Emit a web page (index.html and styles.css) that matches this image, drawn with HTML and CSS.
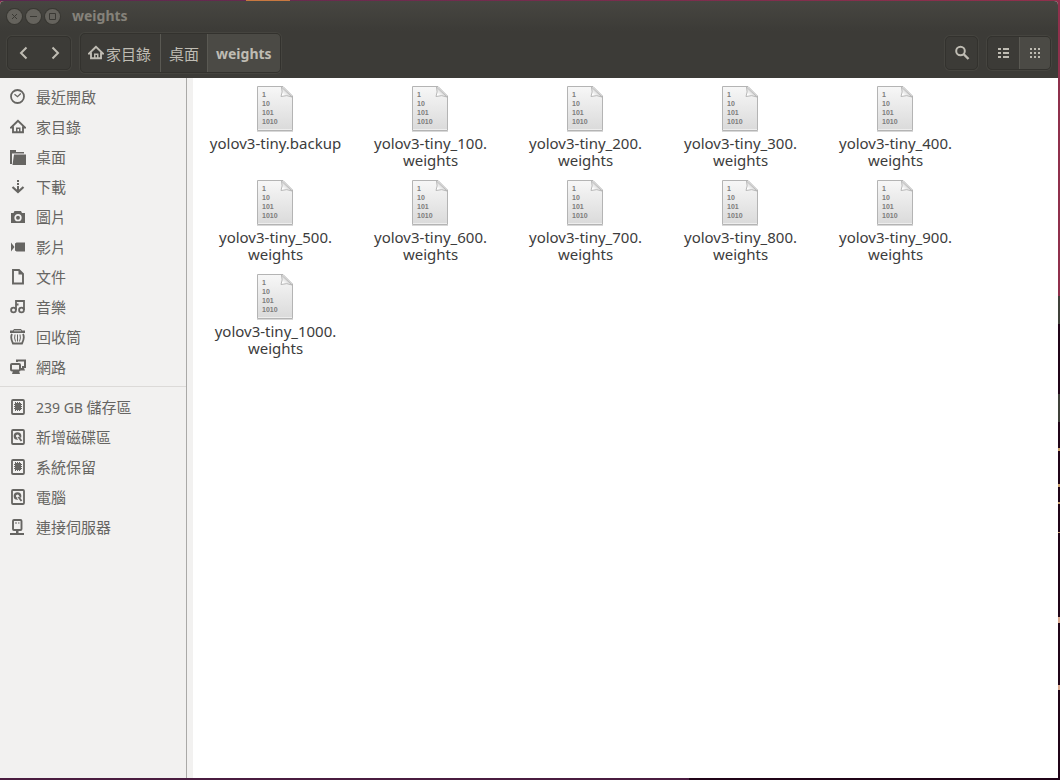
FILE: index.html
```html
<!DOCTYPE html>
<html lang="zh-Hant">
<head>
<meta charset="utf-8">
<title>weights</title>
<link rel="stylesheet" href="styles.css">
</head>
<body>
<svg class="defs" aria-hidden="true">
  <defs>
    <linearGradient id="paper" x1="0" y1="0" x2="0" y2="1"><stop offset="0" stop-color="#f7f7f7"/><stop offset="1" stop-color="#dadada"/></linearGradient>
    <linearGradient id="fold" x1="0" y1="1" x2="1" y2="0"><stop offset="0.2" stop-color="#ffffff"/><stop offset="0.6" stop-color="#d2d2d2"/></linearGradient>
    <symbol id="i-home" viewBox="0 0 16 16"><path d="M8 1.800 1 8.500h2V13.200h10V8.500h2z" fill="none" stroke="currentColor" stroke-width="1.900"/><path d="M6 9h1.500v4H6zM9 9h1.500v4H9zM6 8.500h4.500V10H6z" fill="currentColor"/></symbol>
    <symbol id="i-clock" viewBox="0 0 16 16"><circle cx="7.500" cy="7.500" r="6.500" fill="none" stroke="currentColor" stroke-width="1.800"/><path d="m4.500 5.200 3 2.500 3.300-3.200" fill="none" stroke="currentColor" stroke-width="1.300"/></symbol>
    <symbol id="i-folder" viewBox="0 0 16 16"><path d="M0 1h6v2h8v1.500H2V15H0z" fill="currentColor"/><path d="M4 5.500H16V16H2.500z" fill="currentColor"/></symbol>
    <symbol id="i-down" viewBox="0 0 16 16"><path d="M7 1h2v2H7zM7 4h2v2H7zM7 7h2v5H7z" fill="currentColor"/><path d="m2.500 8 5.500 5 5.500-5" fill="none" stroke="currentColor" stroke-width="2.200"/></symbol>
    <symbol id="i-camera" viewBox="0 0 16 16"><path d="M4.500 2h6.500l1 2h3v10H1V4h2.500z" fill="currentColor"/><circle cx="8" cy="8.700" r="2.800" fill="none" stroke="#f2f1f0" stroke-width="1.700"/></symbol>
    <symbol id="i-video" viewBox="0 0 16 16"><path d="M1 3.500 4.500 8 1 12.500zM5 4.500 6.500 3.500H15v9H6.500L5 11.500z" fill="currentColor"/></symbol>
    <symbol id="i-doc" viewBox="0 0 16 16"><path d="M3 1h6l4 4v9.500H3z" fill="none" stroke="currentColor" stroke-width="1.900"/><path d="M8.500 1v4.500H13z" fill="currentColor"/></symbol>
    <symbol id="i-music" viewBox="0 0 16 16"><g fill="none" stroke="currentColor" stroke-width="1.800"><circle cx="3.500" cy="11" r="2.400"/><circle cx="11.500" cy="11" r="2.400"/><path d="M6 11V2h8v9M6 5.500h2.500"/></g></symbol>
    <symbol id="i-trash" viewBox="0 0 16 16"><path d="M4 0h7l1 1.500h3V4H0V1.500h3zM4 1.500v.8h7v-.8z" fill="currentColor" fill-rule="evenodd"/><path d="M2 5Q0 8.500 3 14.500h9Q15 8.500 13 5" fill="none" stroke="currentColor" stroke-width="1.800"/><path d="M5 5.500q-1 3.500.5 7M7.500 5.500v7M10 5.500q1 3.500-.5 7" fill="none" stroke="currentColor" stroke-width="1"/></symbol>
    <symbol id="i-network" viewBox="0 0 16 16"><path d="M7 3V1.500h8V8h-3" fill="none" stroke="currentColor" stroke-width="2"/><rect x="1" y="5" width="9" height="6.500" rx="1" fill="none" stroke="currentColor" stroke-width="2"/><path d="M3 12h6l1 3H2zM11 9h3l1 2.500h-4z" fill="currentColor"/></symbol>
    <symbol id="i-chip" viewBox="0 0 16 16"><rect x="2" y="1" width="12" height="14" rx="1" fill="none" stroke="currentColor" stroke-width="1.800"/><path d="M5 4h6v7H5z" fill="currentColor"/><path d="M4 5.500h8M4 7.500h8M4 9.500h8M5.500 3v9M7.500 3v9M9.500 3v9" stroke="currentColor" stroke-width="1"/></symbol>
    <symbol id="i-disk" viewBox="0 0 16 16"><rect x="2" y="1" width="12" height="14" rx="1" fill="none" stroke="currentColor" stroke-width="1.800"/><circle cx="7.500" cy="7" r="2.700" fill="none" stroke="currentColor" stroke-width="2.300"/><path d="m8 8 3.500 4.500" stroke="#f2f1f0" stroke-width="3"/><path d="m8.500 8 3 4" stroke="currentColor" stroke-width="1.800"/></symbol>
    <symbol id="i-server" viewBox="0 0 16 16"><rect x="3" y="1" width="8.500" height="10" rx="1" fill="none" stroke="currentColor" stroke-width="1.900"/><path d="M6 11h2.500v3H6zM0 14h14v2H0zM5 3.500h2v1H5zM8 3.500h1.500v1H8z" fill="currentColor"/></symbol>
    <symbol id="i-binary" viewBox="0 0 38 48">
      <path d="M.5 1.500h25.500l9.500 9.500v34.500h-35z" fill="url(#paper)" stroke="#b4b4b4"/>
      <path d="M1 44.500h34" stroke="#eeeeee"/><path d="M0 46.500h36" stroke="#d8d8d8"/>
      <path d="M24.500 2q1.500 5-.5 9.500 6-2 11 .5z" fill="url(#fold)" stroke="#b8b8b8"/>
      <g class="bits"><text x="5" y="12">1</text><text x="5" y="21">10</text><text x="5" y="30">101</text><text x="5" y="39">1010</text></g>
    </symbol>
  </defs>
</svg>
<div class="window">
  <header class="header">
    <div class="titlebar">
      <button class="wm" aria-label="關閉"><svg viewBox="0 0 15 15"><path d="m5 5 5 5m0-5-5 5"/></svg></button>
      <button class="wm" aria-label="最小化"><svg viewBox="0 0 15 15"><path d="M4 7.500h7"/></svg></button>
      <button class="wm" aria-label="最大化"><svg viewBox="0 0 15 15"><path d="M4.500 4.500h6v6h-6z"/></svg></button>
      <h1 class="title">weights</h1>
    </div>
    <div class="toolbar">
      <div class="group nav">
        <button class="tool" aria-label="上一頁"><svg class="icon" viewBox="0 0 16 16"><path class="chevron" d="M10.500 2.500 5 8l5.500 5.500"/></svg></button>
        <button class="tool" aria-label="下一頁"><svg class="icon" viewBox="0 0 16 16"><path class="chevron" d="M5.500 2.500 11 8l-5.500 5.500"/></svg></button>
      </div>
      <nav class="group path">
        <button class="crumb"><svg class="icon"><use href="#i-home"/></svg>家目錄</button>
        <button class="crumb">桌面</button>
        <button class="crumb current">weights</button>
      </nav>
      <div class="group search">
        <button class="tool" aria-label="搜尋"><svg class="icon" viewBox="0 0 16 16"><circle cx="6.500" cy="6" r="4.300" fill="none" stroke="currentColor" stroke-width="2"/><path d="m9.500 9 5 5" stroke="currentColor" stroke-width="2.400"/></svg></button>
      </div>
      <div class="group views">
        <button class="tool" aria-label="列表檢視"><svg class="icon" viewBox="0 0 16 16"><path d="M2 3h3v2H2zM7 3h6v2H7zM2 7h3v2H2zM7 7h6v2H7zM2 11h3v2H2zM7 11h6v2H7z" fill="currentColor"/></svg></button>
        <button class="tool current" aria-label="圖示檢視"><svg class="icon" viewBox="0 0 16 16"><path d="M3 3h2v2H3zM7 3h2v2H7zM11 3h2v2h-2zM3 7h2v2H3zM7 7h2v2H7zM11 7h2v2h-2zM3 11h2v2H3zM7 11h2v2H7zM11 11h2v2h-2z" fill="currentColor"/></svg></button>
      </div>
    </div>
  </header>
  <div class="content">
    <aside class="sidebar">
      <nav class="places">
        <a href="#"><svg class="icon"><use href="#i-clock"/></svg><span>最近開啟</span></a>
        <a href="#"><svg class="icon"><use href="#i-home"/></svg><span>家目錄</span></a>
        <a href="#"><svg class="icon"><use href="#i-folder"/></svg><span>桌面</span></a>
        <a href="#"><svg class="icon"><use href="#i-down"/></svg><span>下載</span></a>
        <a href="#"><svg class="icon"><use href="#i-camera"/></svg><span>圖片</span></a>
        <a href="#"><svg class="icon"><use href="#i-video"/></svg><span>影片</span></a>
        <a href="#"><svg class="icon"><use href="#i-doc"/></svg><span>文件</span></a>
        <a href="#"><svg class="icon"><use href="#i-music"/></svg><span>音樂</span></a>
        <a href="#"><svg class="icon"><use href="#i-trash"/></svg><span>回收筒</span></a>
        <a href="#"><svg class="icon"><use href="#i-network"/></svg><span>網路</span></a>
      </nav>
      <nav class="places">
        <a href="#"><svg class="icon"><use href="#i-chip"/></svg><span><span class="latin">239 GB </span>儲存區</span></a>
        <a href="#"><svg class="icon"><use href="#i-disk"/></svg><span>新增磁碟區</span></a>
        <a href="#"><svg class="icon"><use href="#i-chip"/></svg><span>系統保留</span></a>
        <a href="#"><svg class="icon"><use href="#i-disk"/></svg><span>電腦</span></a>
        <a href="#"><svg class="icon"><use href="#i-server"/></svg><span>連接伺服器</span></a>
      </nav>
    </aside>
    <main class="files">
      <a class="file" href="#"><svg><use href="#i-binary"/></svg><span>yolov3-tiny.backup</span></a>
      <a class="file" href="#"><svg><use href="#i-binary"/></svg><span>yolov3-tiny_100.<wbr>weights</span></a>
      <a class="file" href="#"><svg><use href="#i-binary"/></svg><span>yolov3-tiny_200.<wbr>weights</span></a>
      <a class="file" href="#"><svg><use href="#i-binary"/></svg><span>yolov3-tiny_300.<wbr>weights</span></a>
      <a class="file" href="#"><svg><use href="#i-binary"/></svg><span>yolov3-tiny_400.<wbr>weights</span></a>
      <a class="file" href="#"><svg><use href="#i-binary"/></svg><span>yolov3-tiny_500.<wbr>weights</span></a>
      <a class="file" href="#"><svg><use href="#i-binary"/></svg><span>yolov3-tiny_600.<wbr>weights</span></a>
      <a class="file" href="#"><svg><use href="#i-binary"/></svg><span>yolov3-tiny_700.<wbr>weights</span></a>
      <a class="file" href="#"><svg><use href="#i-binary"/></svg><span>yolov3-tiny_800.<wbr>weights</span></a>
      <a class="file" href="#"><svg><use href="#i-binary"/></svg><span>yolov3-tiny_900.<wbr>weights</span></a>
      <a class="file" href="#"><svg><use href="#i-binary"/></svg><span>yolov3-tiny_1000.<wbr>weights</span></a>
    </main>
  </div>
</div>
</body>
</html>
```
FILE: styles.css
```css
* { box-sizing: border-box; }

body {
  margin: 0;
  min-height: 100vh;
  display: flex;
  padding: 1px 2px 2px 0;
  font: 15px "Noto Sans", "Noto Sans CJK TC", sans-serif;
  background:
    linear-gradient(90deg, transparent 246px, #c87840 246px 290px, transparent 290px) top / 100% 1px no-repeat,
    linear-gradient(90deg, #5a2850, #90304c) top / 100% 1px no-repeat,
    linear-gradient(90deg, #4a1c40 65%, #200418 65%) bottom / 100% 2px no-repeat,
    linear-gradient(transparent 448px, #c8a070 448px 451px, transparent 451px 484px, #c8a070 484px 487px, transparent 487px 502px, #c8a070 502px 504px, transparent 504px 532px, #c8a070 532px 533px, transparent 533px 617px, #d8a890 617px 623px, transparent 623px 685px, #d8a890 685px 690px, transparent 690px),
    linear-gradient(#90304c 296px, #40413a 296px 324px, #200418 324px 394px, #40413a 394px 422px, #200418 422px);
}

.defs { position: absolute; width: 0; height: 0; }
.bits { font: bold 7px "Liberation Sans", sans-serif; fill: #7c7c7c; }

button {
  margin: 0;
  padding: 0;
  border: 0;
  background: none;
  color: inherit;
  font: inherit;
}

a { color: inherit; text-decoration: none; }
.icon { width: 16px; height: 16px; flex: none; display: block; }

.window {
  flex: 1;
  display: flex;
  flex-direction: column;
  border-radius: 4px 4px 0 0;
  overflow: hidden;
  background: #ffffff;
}

.header {
  background: linear-gradient(#474641, #3c3b37 30px);
  color: #bfbcb3;
  padding-bottom: 4px;
}

.titlebar {
  display: flex;
  align-items: center;
  gap: 4px;
  height: 30px;
  padding-left: 7px;
}

.wm {
  width: 15px;
  height: 15px;
  border-radius: 50%;
  background: #65635d;
  box-shadow: 0 0 0 1px #383732;
}
.wm svg { display: block; fill: none; stroke: #3a3934; }

.title {
  margin: 0 0 0 8px;
  font-size: 14px;
  line-height: 20px;
  font-weight: 700;
  color: #85827a;
}

.toolbar {
  display: flex;
  align-items: center;
  height: 43px;
  padding: 1px 7px 0;
}

.group {
  display: flex;
  height: 34px;
  border: 1px solid #33322e;
  border-radius: 5px;
  box-shadow: 0 0 0 1px #45443f;
  overflow: hidden;
}

.tool {
  width: 31px;
  display: grid;
  place-items: center;
}
.chevron { fill: none; stroke: currentColor; stroke-width: 2; }

.path { height: 40px; margin-left: 9px; }
.search { margin-left: auto; }
.views { margin-left: 9px; }

.crumb {
  display: flex;
  align-items: center;
  gap: 2px;
  padding: 0 8px;
}
.crumb:first-child { padding-left: 7px; padding-right: 9px; }
.crumb + .crumb, .views .tool + .tool { border-left: 1px solid #5a5953; }
.current { background: #4b4a45; }
.crumb.current { font-size: 14px; font-weight: 700; }

.content { flex: 1; display: flex; }

.sidebar {
  width: 193px;
  flex: none;
  background: linear-gradient(90deg, transparent 186px, #aaa9a7 186px 187px, transparent 187px) #f2f1f0;
  color: #666562;
  padding-right: 7px;
}

.places { padding: 4px 0; }
.places + .places { border-top: 1px solid #dcdad8; padding-top: 5px; }

.places a {
  display: flex;
  align-items: center;
  gap: 10px;
  height: 30px;
  padding-left: 10px;
}
.places a > span { padding-bottom: 2px; }
.latin { font-size: 14px; }

.files {
  flex: 1;
  display: grid;
  grid-template-columns: repeat(auto-fill, 155px);
  grid-auto-rows: 94px;
  align-content: start;
  padding: 7px 0 0 5px;
}

.file {
  display: flex;
  flex-direction: column;
  align-items: center;
  gap: 2px;
  color: #3c3c3c;
  text-align: center;
}
.file svg { width: 38px; height: 48px; }
.file span { max-width: 140px; line-height: 17px; }
```
